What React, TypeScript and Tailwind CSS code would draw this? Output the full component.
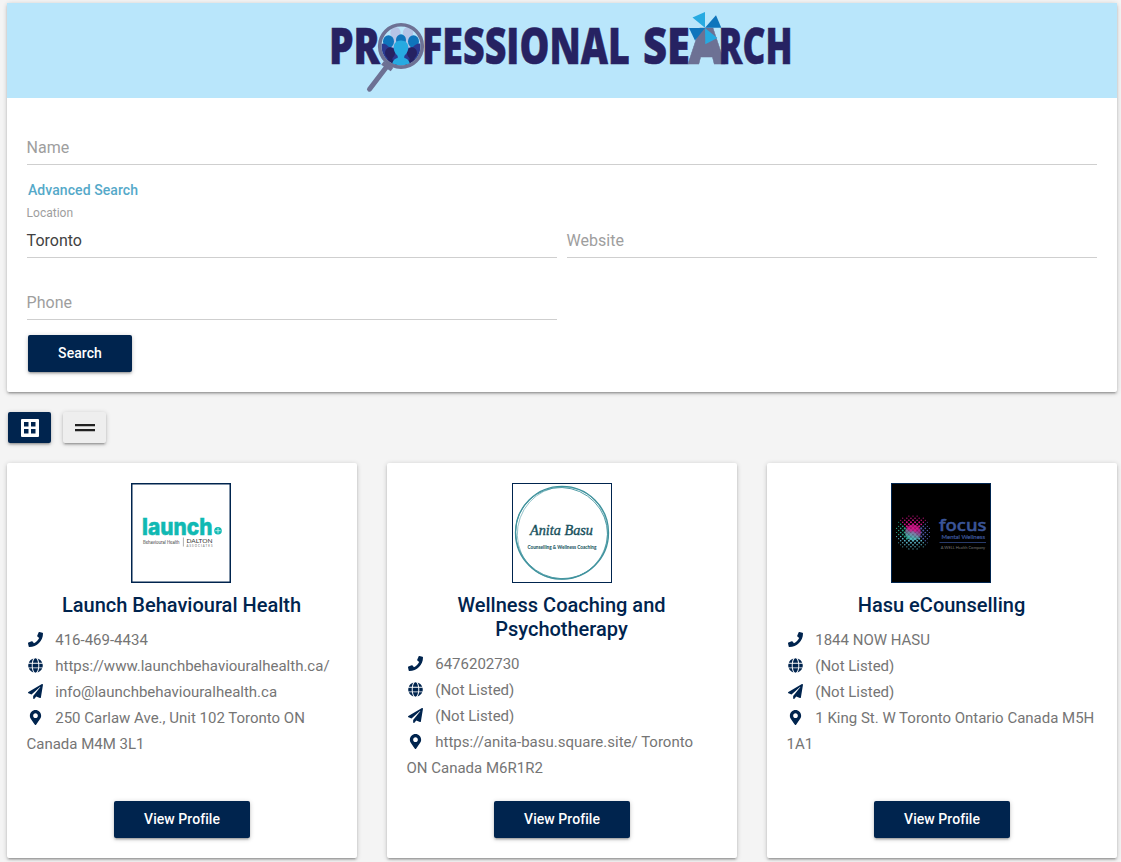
import React from "react";
import { FaPhone, FaGlobe, FaPaperPlane, FaMapMarkerAlt } from "react-icons/fa";

const sans = "'Open Sans', 'Noto Sans', sans-serif";

function Word({ x, w, children, fill = "#262262" }: { x: number; w: number; children: string; fill?: string }) {
  return (
    <text
      x={x}
      y={64}
      textLength={w}
      lengthAdjust="spacingAndGlyphs"
      fontFamily={sans}
      fontWeight={800}
      fontSize={50}
      fill={fill}
      stroke={fill}
      strokeWidth={0.5}
    >
      {children}
    </text>
  );
}

function Person({ x, y, r, fill }: { x: number; y: number; r: number; fill: string }) {
  return (
    <g fill={fill}>
      <ellipse cx={x} cy={y} rx={r} ry={r * 1.15} />
      <path d={`M${x - r * 1.5} ${y + r * 3.4}q0 ${-r * 1.8} ${r} ${-r * 2}v${-r}h${r}v${r}q${r} 0.2 ${r} ${r * 2}z`} />
    </g>
  );
}

function Banner() {
  return (
    <svg className="block overflow-visible" width="470" height="95" viewBox="327 3 470 95" role="img">
      <Word x={329} w={51}>PR</Word>
      <Word x={422} w={208}>FESSIONAL</Word>
      <Word x={643} w={47}>SE</Word>
      <Word x={688} w={37} fill="#6d7194">A</Word>
      <Word x={718.5} w={74}>RCH</Word>
      <path d="M704 29H707L714 55H698Z" fill="#6d7194" />
      <path d="M692.5 17.5L705 12V27.7Z" fill="#27aae1" />
      <path d="M705 27.7L716 15.3L721.3 27.7Z" fill="#0f75bc" />
      <path d="M689 28H705L695 40.5Z" fill="#0f75bc" />
      <path d="M705 28L717.3 38L705.3 44.3Z" fill="#27aae1" />
      <clipPath id="lens"><circle cx="401" cy="46" r="19.5" /></clipPath>
      <circle cx="401" cy="46" r="20" fill="#b9e6fb" />
      <g clipPath="url(#lens)">
        <Person x={395.5} y={33} r={5.2} fill="#b5c4e6" />
        <Person x={408} y={33} r={5.2} fill="#b5c4e6" />
        <Person x={388.5} y={41.5} r={5.5} fill="#0f75bc" />
        <Person x={401} y={40} r={5} fill="#0f75bc" />
        <Person x={413.5} y={41.5} r={5.5} fill="#0f75bc" />
        <path d="M381 44q4-2 8 3l12 2 12-2q4-5 9-3v22h-41z" fill="#2b3990" />
        <Person x={390} y={53} r={5} fill="#262262" />
        <Person x={412} y={53} r={5} fill="#262262" />
        <path d="M401 40.500c-5 0-7.300 3-7.300 7 0 4 2.500 7 4 8.500v2c-3 1-5 1.500-6 8h18.600c-1-6.500-3-7-6-8v-2c1.500-1.500 4-4.500 4-8.500 0-4-2.300-7-7.300-7z" fill="#27aae1" />
      </g>
      <circle cx="401" cy="46" r="21.300" fill="none" stroke="#6d7194" strokeWidth="3.600" />
      <path d="M388 65L369.500 89.200" stroke="#6d7194" strokeWidth="5" strokeLinecap="round" />
      <path d="M382.500 63L392 69.500" stroke="#6d7194" strokeWidth="4.500" />
    </svg>
  );
}

function LaunchLogo() {
  return (
    <svg className="block" width="100" height="100" viewBox="0 0 100 100">
      <rect x="0.75" y="0.75" width="98.500" height="98.500" fill="#fff" stroke="#00244e" strokeWidth="1.500" />
      <text x="11" y="51.800" textLength="70.500" lengthAdjust="spacingAndGlyphs" fontFamily="Inter, sans-serif" fontWeight={800} fontSize="22.500" fill="#10b9b3" stroke="#10b9b3" strokeWidth="0.500">launch</text>
      <circle cx="87" cy="47.700" r="3.800" fill="#10b9b3" />
      <path d="M87 45v5.400M84.300 47.700h5.400" stroke="#d8f5f3" strokeWidth="0.800" />
      <text x="12" y="60.500" textLength="36.500" lengthAdjust="spacingAndGlyphs" fontFamily="Inter, sans-serif" fontSize="4.300" fill="#333">Behavioural Health</text>
      <path d="M52.400 54.500v9" stroke="#777" strokeWidth="0.600" />
      <text x="55.500" y="59.800" textLength="26" lengthAdjust="spacingAndGlyphs" fontFamily="Lato, sans-serif" fontSize="6.500" fill="#333">DALTON</text>
      <text x="55.500" y="63.700" textLength="26" fontFamily="Lato, sans-serif" fontSize="2.800" fill="#666">ASSOCIATES</text>
    </svg>
  );
}

function AnitaLogo() {
  return (
    <svg className="block" width="100" height="100" viewBox="0 0 100 100">
      <rect x="0.500" y="0.500" width="99" height="99" fill="#fff" stroke="#00244e" />
      <g fill="none" stroke="#3f929d">
        <ellipse cx="50" cy="49.700" rx="46.500" ry="46.300" strokeWidth="1.300" />
        <ellipse cx="49.700" cy="50.300" rx="46.300" ry="45.200" strokeWidth="0.800" transform="rotate(35 50 50)" />
        <ellipse cx="50.500" cy="50" rx="45" ry="46.500" strokeWidth="0.700" transform="rotate(20 50 50)" opacity="0.7" />
      </g>
      <text x="18" y="51.500" textLength="63" lengthAdjust="spacingAndGlyphs" fontFamily="'Liberation Serif', cursive" fontStyle="italic" fontSize="15.500" fill="#17505c" stroke="#17505c" strokeWidth="0.400">Anita Basu</text>
      <text x="15.500" y="66.300" textLength="69" lengthAdjust="spacingAndGlyphs" fontFamily="Lato, sans-serif" fontWeight={900} fontSize="4.800" fill="#1e5b66">Counselling &amp; Wellness Coaching</text>
    </svg>
  );
}

const dots: { x: number; y: number; r: number; c: string }[] = [];
for (let i = -8; i <= 8; i++) {
  for (let j = -8; j <= 8; j++) {
    if ((i + j) % 2 !== 0) continue;
    const dx = i * 2.05;
    const dy = j * 2.05;
    const d = Math.hypot(dx, dy);
    if (d > 18) continue;
    const c = dy < -2 && Math.abs(dx) < -dy + 3 ? "#d8128a" : dx < -3 && dy < 10 + dx / 2 ? "#25a585" : dx > 2 && dy < dx ? "#4d5aa5" : "#58b0c4";
    dots.push({ x: 22 + dx, y: 49.5 + dy, r: 1.6 - d * 0.06, c });
  }
}

function FocusLogo() {
  return (
    <svg className="block" width="100" height="100" viewBox="0 0 100 100">
      <rect x="0.500" y="0.500" width="99" height="99" fill="#000" stroke="#00244e" />
      <defs>
        <linearGradient id="core" x1="0.65" y1="0" x2="0.35" y2="1">
          <stop offset="0.3" stopColor="#d0168a" />
          <stop offset="0.6" stopColor="#8077a0" />
          <stop offset="0.85" stopColor="#4ec0bb" />
        </linearGradient>
      </defs>
      {dots.map((p, k) => (
        <circle key={k} cx={p.x} cy={p.y} r={p.r} fill={p.c} />
      ))}
      <circle cx="22" cy="49.500" r="8" fill="url(#core)" opacity="0.7" />
      <text x="48" y="48" textLength="47.500" lengthAdjust="spacingAndGlyphs" fontFamily="'Noto Sans', sans-serif" fontWeight={500} fontSize="17" fill="#3b5598" stroke="#3b5598" strokeWidth="0.500">focus</text>
      <text x="50.500" y="56.300" textLength="43.500" lengthAdjust="spacingAndGlyphs" fontFamily="Lato, sans-serif" fontSize="6" fill="#3b5598" stroke="#3b5598" strokeWidth="0.200">Mental Wellness</text>
      <path d="M48.500 59.500H95" stroke="#3b5598" strokeWidth="0.700" />
      <text x="49.700" y="66.200" textLength="44.500" lengthAdjust="spacingAndGlyphs" fontFamily="Lato, sans-serif" fontSize="4.500" fill="#777">A WELL Health Company</text>
    </svg>
  );
}

const raised = "shadow-[0_2px_2px_0_rgba(0,0,0,0.14),0_3px_1px_-2px_rgba(0,0,0,0.12),0_1px_5px_0_rgba(0,0,0,0.2)]";
const panel = `bg-white rounded-[2px] ${raised}`;

function Field({ label, value }: { label: string; value?: string }) {
  return (
    <div className={`h-[35px] border-b border-[#cfcfcf] text-base leading-[36px] ${value ? "text-[#424242]" : "text-[#9e9e9e]"}`}>
      <span className="-ml-[0.4px]">{value ?? label}</span>
    </div>
  );
}

function Btn({ children, className = "" }: { children: React.ReactNode; className?: string }) {
  return (
    <button className={`h-[37px] rounded-[2px] bg-[#00244e] text-center text-white text-sm font-medium leading-[37px] tracking-[0.06px] ${raised} ${className}`}>
      {children}
    </button>
  );
}

const pros = [
  {
    logo: <LaunchLogo />,
    offset: "pr-[2px]",
    name: "Launch Behavioural Health",
    lines: ["416-469-4434", "https://www.launchbehaviouralhealth.ca/", "info@launchbehaviouralhealth.ca", "250 Carlaw Ave., Unit 102 Toronto ON Canada M4M 3L1"],
  },
  {
    logo: <AnitaLogo />,
    offset: "pr-0",
    name: "Wellness Coaching and Psychotherapy",
    lines: ["6476202730", "(Not Listed)", "(Not Listed)", "https://anita-basu.square.site/ Toronto ON Canada M6R1R2"],
  },
  {
    logo: <FocusLogo />,
    offset: "pr-[2px]",
    name: "Hasu eCounselling",
    lines: ["1844 NOW HASU", "(Not Listed)", "(Not Listed)", "1 King St. W Toronto Ontario Canada M5H 1A1"],
  },
];
const icons = [FaPhone, FaGlobe, FaPaperPlane, FaMapMarkerAlt];

export default function App() {
  return (
    <div className="h-[862px] w-[1121px] overflow-hidden bg-[#f4f4f4] pt-[3px] pl-[7px] font-['Roboto',sans-serif]">
      <section className={`h-[389px] w-[1110px] ${panel}`}>
        <div className="flex h-[95px] justify-center bg-[#b9e6fb]">
          <Banner />
        </div>
        <div className="px-5 pt-8">
          <Field label="Name" />
          <div className="mt-[15px] pl-px text-sm font-medium leading-5 tracking-[0.07px] text-[#55a9c9]">Advanced Search</div>
          <div className="mt-[5px] -ml-[0.4px] text-xs leading-4 text-[#9e9e9e]">Location</div>
          <div className="mt-[2px] grid grid-cols-2 gap-x-[10px] gap-y-[27px]">
            <Field label="Location" value="Toronto" />
            <Field label="Website" />
            <Field label="Phone" />
          </div>
          <Btn className="mt-[15px] ml-px w-[104px]">Search</Btn>
        </div>
      </section>

      <div className="mt-5 ml-px flex gap-3">
        <button className={`flex h-[31px] w-[43px] items-center justify-center rounded-[2px] bg-[#00244e] ${raised}`}>
          <svg width="18" height="18" viewBox="0 0 18 18">
            <path fill="#fff" fillRule="evenodd" d="M0 1q0-1 1-1h16q1 0 1 1v16q0 1-1 1h-16q-1 0-1-1zM3 3v4.500h4.500V3zM10 3v4.500h4.500V3zM3 10v4.500h4.500v-4.500zM10 10v4.500h4.500v-4.500z" />
          </svg>
        </button>
        <button className={`flex h-[31px] w-[43px] items-center justify-center rounded-[2px] bg-[#eee] ${raised}`}>
          <svg width="20" height="9" viewBox="0 0 20 9">
            <path fill="#212121" d="M0 1h20v2.200H0zM0 6h20v2.200H0z" />
          </svg>
        </button>
      </div>

      <div className="mt-5 flex gap-[30px]">
        {pros.map((p) => (
          <article key={p.name} className={`flex h-[395px] w-[350px] shrink-0 flex-col px-5 pt-5 pb-5 ${panel}`}>
            <div className={`flex justify-center ${p.offset}`}>{p.logo}</div>
            <h2 className="mt-[10px] pr-px text-center text-xl font-medium leading-6 text-[#00244e]">{p.name}</h2>
            <ul className="mt-[10px] -ml-[0.5px] text-[15px] leading-[26px] text-[#757575]">
              {p.lines.map((t, i) => {
                const Icon = icons[i];
                return (
                  <li key={i}>
                    <span className="mr-[10px] inline-flex w-[18.75px] justify-center align-[-2px]">
                      <Icon size={15} color="#00244e" />
                    </span>
                    {t}
                  </li>
                );
              })}
            </ul>
            <Btn className="mt-auto w-[136px] self-center">View Profile</Btn>
          </article>
        ))}
      </div>
    </div>
  );
}
